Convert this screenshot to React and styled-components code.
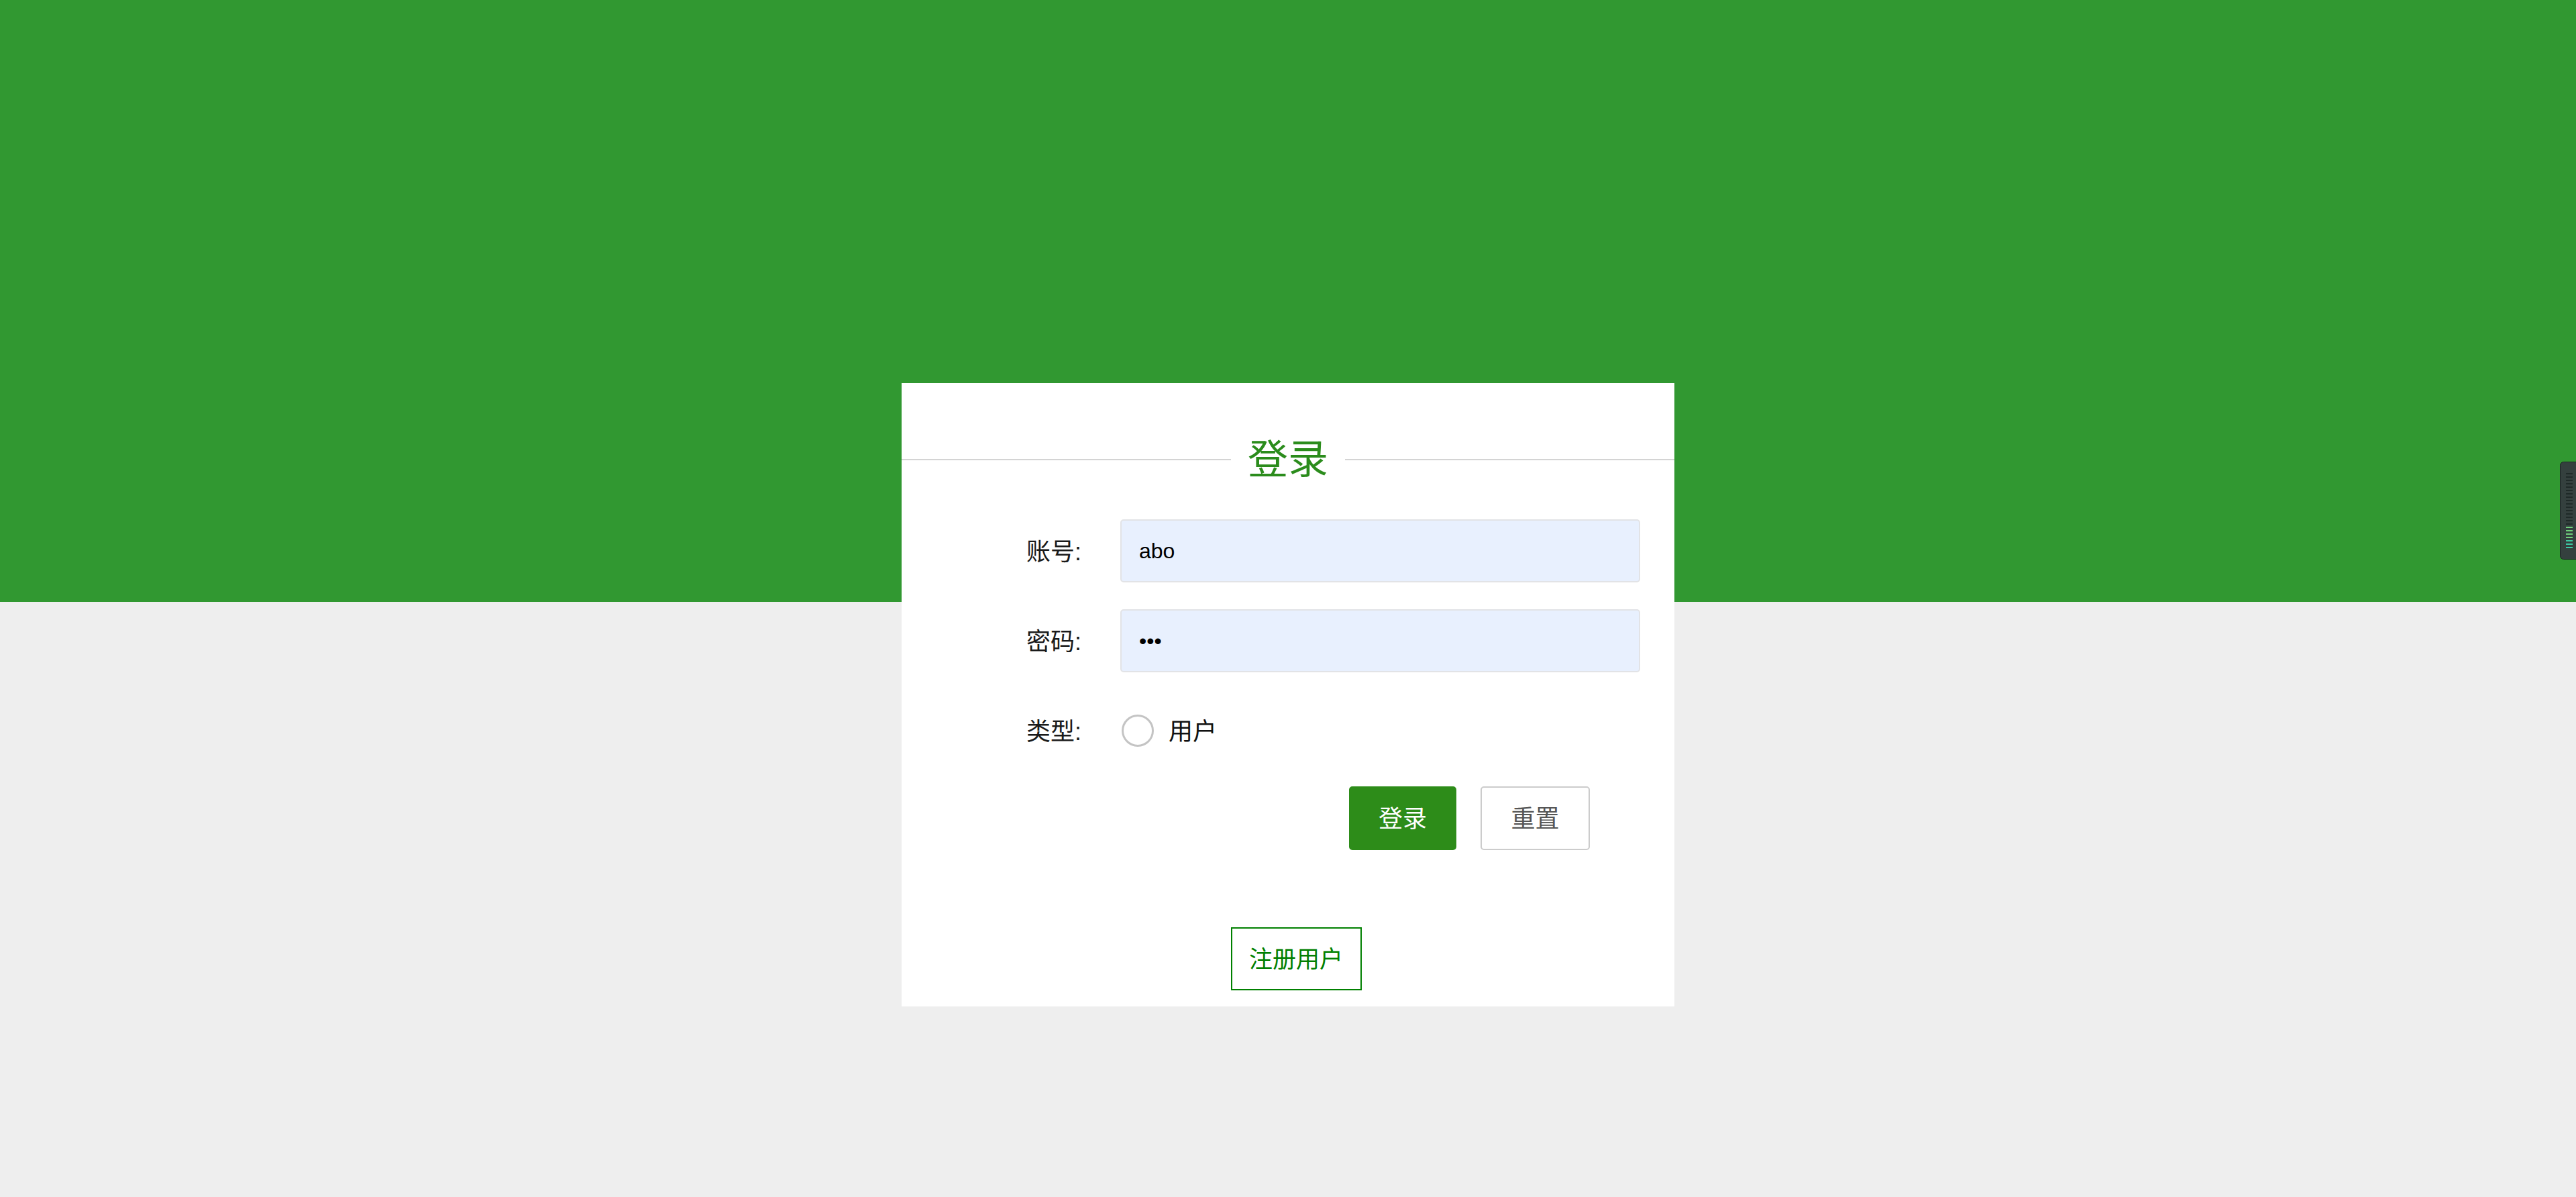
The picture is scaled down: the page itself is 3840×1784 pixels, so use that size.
import React from 'react';
import styled, {createGlobalStyle} from 'styled-components';

const GlobalStyle = createGlobalStyle`
  html, body {
    margin: 0;
    padding: 0;
  }
  body {
    font-family: "Liberation Sans", "Noto Sans CJK SC", sans-serif;
    background: #eeeeee;
  }
  * {
    box-sizing: border-box;
  }
`;

const Page = styled.div`
  min-height: 100vh;
  padding-top: 571px;
  background: linear-gradient(to bottom, #319831 0, #319831 897px, #eeeeee 897px);
`;

const Card = styled.div`
  width: 1152px;
  margin: 0 auto;
  background: #ffffff;
  padding: 84px 0 24px;
`;

const Header = styled.div`
  display: flex;
  align-items: center;
  height: 60px;
`;

const Rule = styled.div`
  flex: 1;
  height: 2px;
  background: #d4d4d4;
`;

const Title = styled.h2`
  margin: 0;
  padding: 2px 25px 0;
  font-size: 60px;
  line-height: 60px;
  font-weight: 400;
  color: #2b8c1c;
`;

const Form = styled.form`
  display: flex;
  flex-direction: column;
  gap: 40px;
  margin-top: 59px;
`;

const Row = styled.div`
  display: flex;
  align-items: center;
  height: 94px;
`;

const Label = styled.label`
  width: 268px;
  padding-bottom: 5px;
  text-align: right;
  font-size: 36px;
  color: #1a1a1a;
  margin-right: 58px;
`;

const Input = styled.input`
  width: 775px;
  height: 94px;
  padding: 0 26px;
  border: 2px solid #e2e3e6;
  border-radius: 5px;
  background: #e8f0fe;
  font-family: "Liberation Sans", "Noto Sans CJK SC", sans-serif;
  font-size: 32px;
  color: #000000;
  outline: none;
`;

const Radio = styled.input`
  appearance: none;
  width: 48px;
  height: 48px;
  margin: 0 22px 0 2px;
  border: 3px solid #c4c4c4;
  border-radius: 50%;
  background: #ffffff;
`;

const RadioText = styled.span`
  padding-bottom: 5px;
  font-size: 36px;
  color: #111111;
`;

const ButtonRow = styled.div`
  display: flex;
  gap: 36px;
  margin-top: -4px;
  padding-left: 667px;
`;

const Button = styled.button`
  width: ${p => (p.primary ? '160px' : '163px')};
  height: 95px;
  padding: 0 0 5px;
  border: 2px solid ${p => (p.primary ? '#2d8c19' : '#cccccc')};
  border-radius: 5px;
  background: ${p => (p.primary ? '#2d8c19' : '#ffffff')};
  color: ${p => (p.primary ? '#ffffff' : '#555555')};
  font-family: "Liberation Sans", "Noto Sans CJK SC", sans-serif;
  font-size: 36px;
  cursor: pointer;
`;

const RegisterWrap = styled.div`
  display: flex;
  justify-content: center;
  margin-top: 115px;
  padding-left: 24px;
`;

const RegisterButton = styled.button`
  width: 195px;
  height: 94px;
  padding: 0 0 5px;
  border: 2px solid #008000;
  background: #ffffff;
  color: #008000;
  font-family: "Liberation Sans", "Noto Sans CJK SC", sans-serif;
  font-size: 35px;
  cursor: pointer;
`;

const SideWidget = styled.div`
  position: fixed;
  right: 0;
  top: 688px;
  width: 24px;
  height: 146px;
`;

function Meter() {
    const bars = [];
    for (let i = 0; i < 23; i++) {
        const lit = i >= 16;
        const color = lit ? (i > 19 ? '#3cc9a2' : '#6fd07c') : '#1f2a28';
        bars.push(<rect key={i} x="9" y={17 + i * 5} width="10" height="2" fill={color}/>);
    }
    return (
        <svg width="24" height="146" viewBox="0 0 24 146">
            <rect x="0.5" y="0.5" width="30" height="145" rx="5" fill="#34403e" stroke="#1b2423"/>
            {bars}
        </svg>
    );
}

export default function App() {
    return (
        <>
            <GlobalStyle/>
            <Page>
                <Card>
                    <Header>
                        <Rule/>
                        <Title>登录</Title>
                        <Rule/>
                    </Header>
                    <Form onSubmit={e => e.preventDefault()}>
                        <Row>
                            <Label>账号:</Label>
                            <Input type="text" defaultValue="abo"/>
                        </Row>
                        <Row>
                            <Label>密码:</Label>
                            <Input type="password" defaultValue="abc"/>
                        </Row>
                        <Row>
                            <Label>类型:</Label>
                            <Radio type="radio" name="type"/>
                            <RadioText>用户</RadioText>
                        </Row>
                        <ButtonRow>
                            <Button primary type="submit">登录</Button>
                            <Button type="reset">重置</Button>
                        </ButtonRow>
                    </Form>
                    <RegisterWrap>
                        <RegisterButton type="button">注册用户</RegisterButton>
                    </RegisterWrap>
                </Card>
                <SideWidget>
                    <Meter/>
                </SideWidget>
            </Page>
        </>
    );
}
